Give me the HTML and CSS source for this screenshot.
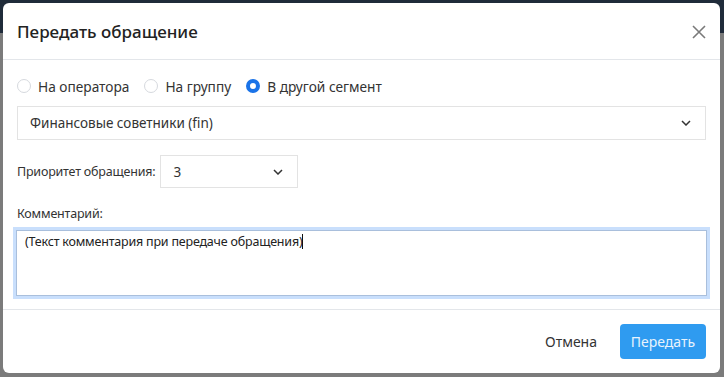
FILE: index.html
```html
<!DOCTYPE html>
<html>
<head>
    <title>Передать обращение</title>
    <link rel="stylesheet" href="styles.css">
</head>
<body>
    <div class="modal">
        <div class="modal-header">
            <h2 class="modal-title">Передать обращение</h2>
            <button class="close" type="button" aria-label="Закрыть">
                <svg width="14" height="14" viewBox="0 0 14 14"><path d="M1 1L13 13M13 1L1 13" stroke="#7a7a7a" stroke-width="1.6" fill="none"/></svg>
            </button>
        </div>

        <div class="modal-body">
            <div class="radio-row">
                <label class="radio"><span class="dot"></span>На оператора</label>
                <label class="radio"><span class="dot"></span>На группу</label>
                <label class="radio checked"><span class="dot"></span>В другой сегмент</label>
            </div>

            <div class="select wide">
                <span>Финансовые советники (fin)</span>
                <svg class="chev" width="10" height="6" viewBox="0 0 10 6"><path d="M1 1L5 5L9 1" stroke="#333" stroke-width="1.5" fill="none"/></svg>
            </div>

            <div class="priority">
                <span class="label">Приоритет обращения:</span>
                <div class="select small">
                    <span>3</span>
                    <svg class="chev" width="10" height="6" viewBox="0 0 10 6"><path d="M1 1L5 5L9 1" stroke="#333" stroke-width="1.5" fill="none"/></svg>
                </div>
            </div>

            <div class="label comment-label">Комментарий:</div>
            <div class="textarea">(Текст комментария при передаче обращения)<span class="caret"></span></div>
        </div>

        <div class="modal-footer">
            <button class="btn-cancel" type="button">Отмена</button>
            <button class="btn-primary" type="button">Передать</button>
        </div>
    </div>
</body>
</html>
```

FILE: styles.css
```css
html, body {
    height: 100%;
}

body {
    margin: 0;
    padding: 3px 4px 4px 3px;
    box-sizing: border-box;
    font-family: "Noto Sans", "Open Sans", sans-serif;
    color: #333;
    background: linear-gradient(#1f2b3a 0, #1f2b3a 33px, #7b7b7b 33px);
}

.modal {
    background: #fff;
    border-radius: 6px;
    height: 370px;
    display: flex;
    flex-direction: column;
}

.modal-header {
    display: flex;
    align-items: center;
    justify-content: space-between;
    height: 56px;
    padding: 0 14px;
    border-bottom: 1px solid #e3e6ea;
}

.modal-title {
    margin: 0;
    font-size: 17px;
    font-weight: 500;
    color: #222;
}

.close {
    border: none;
    background: none;
    padding: 0;
    margin-top: 2px;
    width: 14px;
    height: 14px;
    cursor: pointer;
}

.modal-body {
    padding: 16px 14px 13px 14px;
    border-bottom: 1px solid #e3e6ea;
}

.radio-row {
    display: flex;
    gap: 15px;
    height: 20px;
    align-items: center;
}

.radio {
    display: flex;
    align-items: center;
    gap: 7px;
    font-size: 13.7px;
    color: #333;
}

.dot {
    width: 14px;
    height: 14px;
    border: 1px solid #d6d9de;
    border-radius: 50%;
    box-sizing: border-box;
}

.radio.checked .dot {
    border: 4px solid #1a73e8;
    background: #fff;
}

.select {
    display: flex;
    align-items: center;
    justify-content: space-between;
    border: 1px solid #e3e3e3;
    box-sizing: border-box;
    font-size: 13.5px;
    color: #333;
}

.select.wide {
    margin-top: 10px;
    height: 34px;
    padding: 0 14px 0 12px;
}

.select.small {
    width: 138px;
    height: 33px;
    padding: 0 14px 0 12px;
}

.priority {
    display: flex;
    align-items: center;
    gap: 5px;
    margin-top: 15px;
}

.label {
    font-size: 12.5px;
    color: #333;
    letter-spacing: -0.2px;
}

.comment-label {
    margin-top: 17px;
    height: 16px;
}

.textarea {
    margin: 9px -1px 0 -1px;
    height: 66px;
    box-sizing: border-box;
    border: 1px solid #a9bfdc;
    box-shadow: 0 0 0 3px #c9dffc;
    padding: 2px 8px;
    font-size: 12.5px;
    letter-spacing: -0.2px;
    color: #222;
}

.caret {
    display: inline-block;
    width: 1px;
    height: 15px;
    background: #111;
    vertical-align: -3px;
}

.modal-footer {
    display: flex;
    justify-content: flex-end;
    align-items: center;
    gap: 12px;
    padding: 14px 14px 0 14px;
}

.btn-cancel {
    border: none;
    background: none;
    font-family: inherit;
    font-size: 14px;
    color: #333;
    padding: 8px 11px;
}

.btn-primary {
    border: none;
    border-radius: 4px;
    background: #2f9bf0;
    color: #e8f3fd;
    font-family: inherit;
    font-size: 14px;
    width: 86px;
    height: 35px;
    cursor: pointer;
}
```
